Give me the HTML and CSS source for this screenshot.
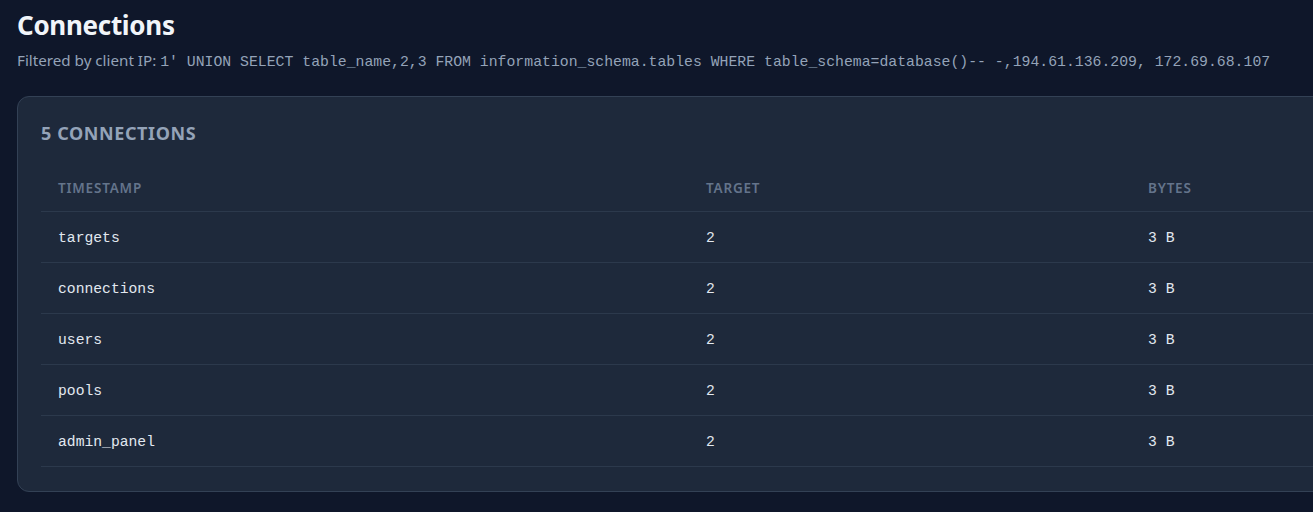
FILE: index.html
```html
<!DOCTYPE html>
<html lang="en">

<head>
    <meta charset="UTF-8">
    <meta name="viewport" content="width=device-width, initial-scale=1.0">
    <title>Connections</title>
    <link rel="stylesheet" href="styles.css">
</head>

<body>
    <div class="page">
        <h1 class="title">Connections</h1>
        <p class="subtitle">Filtered by client IP: <span class="mono">1' UNION SELECT table_name,2,3 FROM information_schema.tables WHERE table_schema=database()-- -,194.61.136.209, 172.69.68.107</span></p>

        <div class="card">
            <h2 class="card-title">5 Connections</h2>
            <table class="conn-table">
                <thead>
                    <tr>
                        <th class="col-time">Timestamp</th>
                        <th class="col-target">Target</th>
                        <th>Bytes</th>
                    </tr>
                </thead>
                <tbody>
                    <tr>
                        <td>targets</td>
                        <td>2</td>
                        <td>3 B</td>
                    </tr>
                    <tr>
                        <td>connections</td>
                        <td>2</td>
                        <td>3 B</td>
                    </tr>
                    <tr>
                        <td>users</td>
                        <td>2</td>
                        <td>3 B</td>
                    </tr>
                    <tr>
                        <td>pools</td>
                        <td>2</td>
                        <td>3 B</td>
                    </tr>
                    <tr>
                        <td>admin_panel</td>
                        <td>2</td>
                        <td>3 B</td>
                    </tr>
                </tbody>
            </table>
        </div>
    </div>
</body>

</html>
```

FILE: styles.css
```css
html,
body {
    margin: 0;
    padding: 0;
    background-color: #0f172a;
    overflow: hidden;
}

body {
    font-family: "Noto Sans", "Open Sans", sans-serif;
    color: #e2e8f0;
}

.page {
    padding: 8px 0 0 17px;
    width: 1500px;
}

.title {
    margin: 0;
    font-size: 26px;
    line-height: 34px;
    font-weight: 700;
    color: #f1f5f9;
    letter-spacing: -0.3px;
}

.subtitle {
    margin: 6px 0 0 0;
    font-size: 15.2px;
    line-height: 24px;
    color: #94a3b8;
}

.mono {
    font-family: "Liberation Mono", "DejaVu Sans Mono", monospace;
    font-size: 14.8px;
    line-height: 20px;
}

.card {
    margin-top: 24px;
    width: 1400px;
    background-color: #1e293b;
    border: 1px solid #334155;
    border-radius: 12px;
    padding: 24px 23px 24px 23px;
}

.card-title {
    margin: 0 0 20px 0;
    font-size: 18px;
    line-height: 24px;
    font-weight: 700;
    text-transform: uppercase;
    letter-spacing: 0.6px;
    color: #94a3b8;
}

.conn-table {
    width: 1300px;
    border-collapse: collapse;
}

.conn-table th {
    text-align: left;
    font-size: 13.5px;
    line-height: 14px;
    font-weight: 600;
    text-transform: uppercase;
    letter-spacing: 0.8px;
    color: #64748b;
    padding: 16px 17px;
    border-bottom: 1px solid #2c394c;
}

.col-time {
    width: 614px;
}

.col-target {
    width: 408px;
}

.conn-table td {
    font-family: "Liberation Mono", "DejaVu Sans Mono", monospace;
    font-size: 14.7px;
    line-height: 18px;
    color: #e2e8f0;
    padding: 17px 17px 15px 17px;
    border-bottom: 1px solid #2c394c;
}
```
